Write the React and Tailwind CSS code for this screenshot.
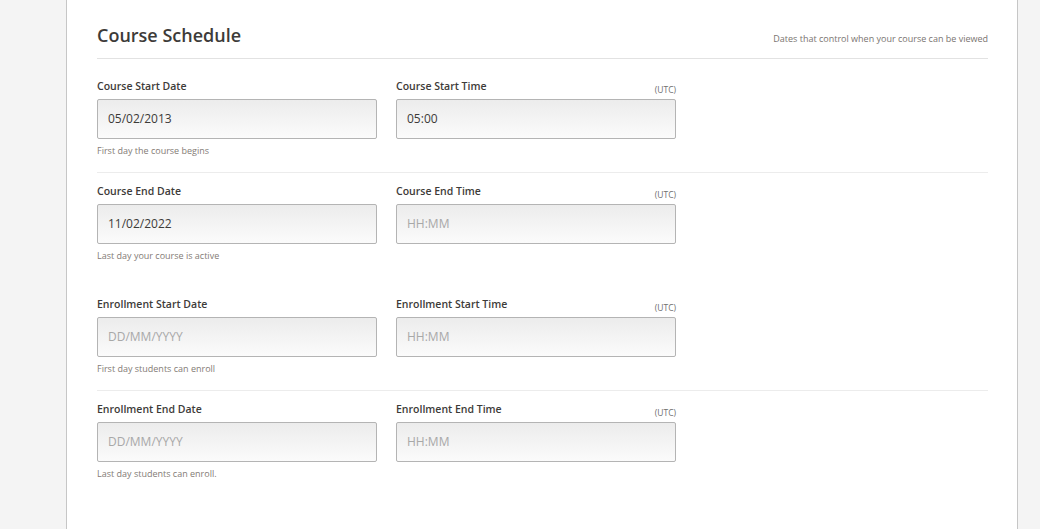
const rows = [
  {
    date: { label: "Course Start Date", value: "05/02/2013", hint: "First day the course begins" },
    time: { label: "Course Start Time", value: "05:00" },
    cls: "pb-[15px] border-b border-[#ececec]",
  },
  {
    date: { label: "Course End Date", value: "11/02/2022", hint: "Last day your course is active" },
    time: { label: "Course End Time", value: "" },
    cls: "pt-[10px] pb-[34px]",
  },
  {
    date: { label: "Enrollment Start Date", value: "", hint: "First day students can enroll" },
    time: { label: "Enrollment Start Time", value: "" },
    cls: "pb-[15px] border-b border-[#ececec]",
  },
  {
    date: { label: "Enrollment End Date", value: "", hint: "Last day students can enroll." },
    time: { label: "Enrollment End Time", value: "" },
    cls: "pt-[10px]",
  },
];

const Field = ({ label, value, placeholder, hint, utc }) => (
  <div className="w-[280px]">
    <div className="flex items-end justify-between h-[16px] mb-[5px]">
      <span className="text-[10.5px] leading-[16px] font-semibold text-[#3d3b39]">{label}</span>
      {utc && <span className="text-[8.5px] leading-[12px] text-[#6f6f6f] mb-[-2px]">(UTC)</span>}
    </div>
    <div className="h-[40px] border border-[#b4b4b4] rounded-[2px] bg-gradient-to-b from-[#ececec] to-[#fbfbfb] flex items-center px-[10px]">
      {value ? (
        <span className="text-[12px] text-[#3d3b39]">{value}</span>
      ) : (
        <span className="text-[12px] text-[#a8a8a8]">{placeholder}</span>
      )}
    </div>
    {hint && <div className="mt-[6px] text-[9px] leading-[12px] text-[#837b75]">{hint}</div>}
  </div>
);

export default function App() {
  return (
    <div className="flex min-h-[529px] bg-[#f4f4f4]" style={{ fontFamily: '"Open Sans", sans-serif' }}>
      <div className="w-[66px] shrink-0" />
      <div className="w-[952px] shrink-0 bg-white border-x border-[#c6c6c6] pl-[30px] pr-[29px] pt-[21px]">
        <div className="flex items-baseline justify-between pb-[9px] border-b border-[#e2e2e2]">
          <h2 className="text-[18px] leading-[28px] font-semibold text-[#3d3b39]">Course Schedule</h2>
          <span className="text-[9px] text-[#7a7470]">Dates that control when your course can be viewed</span>
        </div>
        <div className="pt-[19px]">
          {rows.map((r, i) => (
            <div key={i} className={r.cls}>
              <div className="flex gap-[19px]">
                <Field label={r.date.label} value={r.date.value} placeholder="DD/MM/YYYY" hint={r.date.hint} />
                <Field label={r.time.label} value={r.time.value} placeholder="HH:MM" utc />
              </div>
            </div>
          ))}
        </div>
      </div>
    </div>
  );
}
